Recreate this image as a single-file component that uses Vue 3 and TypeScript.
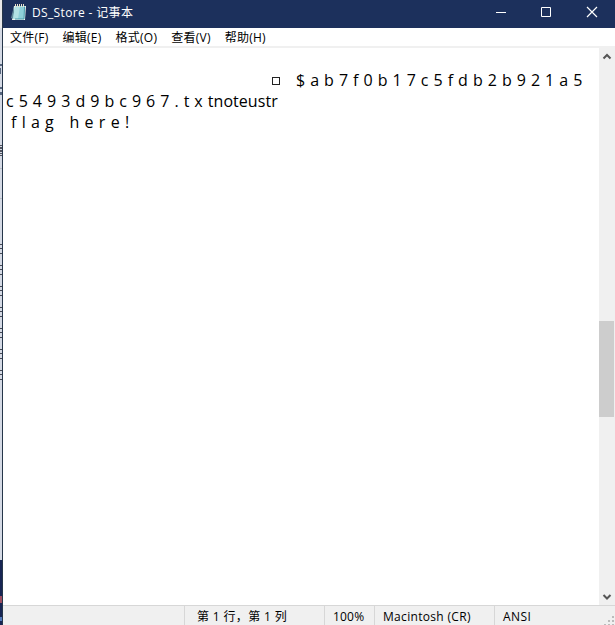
<script setup lang="ts">
const menus: string[] = ['文件(F)', '编辑(E)', '格式(O)', '查看(V)', '帮助(H)']
const marks: number[] = [244, 265, 286, 307, 328, 349, 370]
</script>

<template>
  <div class="screen">
    <div class="backdrop">
      <svg width="2" height="625" viewBox="0 0 2 625" shape-rendering="crispEdges">
        <rect width="2" height="560" fill="#d5dae5" />
        <rect width="2" height="28" fill="#e8e8ea" />
        <path d="M0 64h2v2H0zm0 4h1v6H0zm0 19h2v2H0zm0 5h2v3H0z" fill="#56657d" />
        <path d="M0 145h2v1H0zm0 2h2v2H0zm0 3h2v2H0zm0 3h2v1H0zm0 2h2v1H0z" fill="#51535e" />
        <path d="M0 168h2v1H0zm0 30h2v1H0z" fill="#b9bdc6" />
        <path v-for="y in marks" :key="y" :d="`M0 ${y}h2v1H0zm0 4h2v1H0zm0 5h2v1H0z`" fill="#454954" />
        <rect y="560" width="2" height="65" fill="#172554" />
        <rect y="596" width="2" height="7" fill="#9d4f62" />
        <rect y="617" width="2" height="4" fill="#527abc" />
      </svg>
    </div>
    <main class="window">
      <header class="titlebar">
        <svg class="app-icon" width="16" height="17" viewBox="0 0 16 17">
          <path d="M3 2h12l-1 14H1z" fill="#eef3ee" />
          <path d="M3 2 0 14l3 1z" fill="#648b9b" />
          <path d="M4 2h10l-1 13H2z" fill="#8fd0d9" />
          <path d="M4 2h5L7 15H2z" fill="#b2e1e3" />
          <path d="M13.5 3 13 15H4" fill="none" stroke="#499aaa" />
          <path d="M4.5 0v3m2-3v3m2-3v3m2-3v3m2-3v3" stroke="#e9e5cf" />
        </svg>
        <span class="title">DS_Store - 记事本</span>
        <div class="controls">
          <svg width="46" height="28" viewBox="0 0 46 28"><path d="M17 12.5h10" stroke="#fff" /></svg>
          <svg width="46" height="28" viewBox="0 0 46 28"><path d="M16.5 7.5h9v9h-9z" stroke="#fff" fill="none" /></svg>
          <svg width="46" height="28" viewBox="0 0 46 28"><path d="m16 7 10 10m0-10L16 17" stroke="#fff" stroke-width="1.2" /></svg>
        </div>
      </header>
      <nav class="menubar"><span v-for="menu in menus" :key="menu">{{ menu }}</span></nav>
      <div class="editor">
        <div class="document">
          <p class="line first"><i class="box"></i><span>$ a b 7 f 0 b 1 7 c 5 f d b 2 b 9 2 1 a 5</span></p>
          <p class="line"><span>c 5 4 9 3 d 9 b c 9 6 7 . t x </span><span class="tail">tnoteustr</span></p>
          <p class="line flag">f l a g &nbsp; h e r e !</p>
        </div>
        <div class="scrollbar">
          <svg width="16" height="17" viewBox="0 0 16 17"><path d="m4.5 10.5 3.5-3.5 3.5 3.5" fill="none" stroke="#555" stroke-width="2" /></svg>
          <div class="thumb"></div>
          <svg width="16" height="17" viewBox="0 0 16 17"><path d="m4.5 7 3.5 3.5L11.5 7" fill="none" stroke="#555" stroke-width="2" /></svg>
        </div>
      </div>
      <footer class="status">
        <span class="blank"></span>
        <span class="position">第 1 行，第 1 列</span>
        <span class="zoom">100%</span>
        <span class="newline">Macintosh (CR)</span>
        <span class="encoding">ANSI</span>
        <svg class="grip" width="11" height="11" viewBox="0 0 11 11"><path d="M8 0h2v2H8zM4 4h2v2H4zm4 0h2v2H8zM0 8h2v2H0zm4 0h2v2H4zm4 0h2v2H8z" fill="#bbb" /></svg>
      </footer>
    </main>
  </div>
</template>

<style>
body { margin: 0; overflow: hidden; }
</style>
<style scoped>
.screen { display: flex; width: 615px; height: 625px; background: #fff; font: 12px "Open Sans", "Noto Sans CJK SC", sans-serif; color: #000; overflow: hidden; }
.backdrop { width: 2px; height: 625px; }
.backdrop svg { display: block; }
.window { box-sizing: border-box; width: 613px; height: 625px; border-left: 1px solid #26364a; display: flex; flex-direction: column; }
.titlebar { height: 28px; flex: none; display: flex; background: #1c305c; color: #fff; }
.app-icon { margin: 4px 0 0 8px; flex: none; }
.title { margin-left: 5px; line-height: 25px; white-space: nowrap; letter-spacing: .35px; }
.controls { display: flex; margin-left: auto; margin-right: -2px; }
.controls svg { display: block; }
.menubar { box-sizing: border-box; height: 20px; flex: none; display: flex; gap: 14px; padding-left: 7px; line-height: 20px; border-bottom: 2px solid #f0f0f0; white-space: nowrap; letter-spacing: .25px; }
.editor { display: flex; flex: 1; min-height: 0; }
.document { flex: 1; padding: 22px 0 0 3px; font-size: 16px; }
.line { height: 21px; margin: 0; line-height: 21px; white-space: pre; word-spacing: .87px; }
.first { display: flex; align-items: center; padding-left: 266px; }
.box { width: 6px; height: 6px; border: 1px solid #222; margin-right: 16px; margin-top: 0; }
.tail { letter-spacing: .05px; }
.flag { padding-left: 5px; word-spacing: 1.1px; }
.scrollbar { width: 16px; background: #f0f0f0; display: flex; flex-direction: column; }
.scrollbar svg { display: block; flex: none; }
.thumb { width: 15px; height: 96px; margin: 256px 0 auto; background: #cdcdcd; }
.status { box-sizing: border-box; height: 20px; flex: none; display: flex; border-top: 1px solid #d7d7d7; background: #f0f0f0; line-height: 22px; white-space: nowrap; overflow: hidden; }
.status span { box-sizing: border-box; border-right: 1px solid #d7d7d7; }
.blank { width: 182px; }
.position { width: 140px; padding-left: 12px; letter-spacing: .35px; }
.zoom { width: 50px; padding-left: 8px; letter-spacing: .2px; }
.newline { width: 120px; padding-left: 8px; letter-spacing: .32px; }
.status .encoding { flex: 1; padding-left: 8px; border: 0; letter-spacing: .4px; }
.grip { margin-top: 10px; flex: none; }
.controls svg { margin-right: 0; }
.controls { transform: translateX(0); }
</style>
